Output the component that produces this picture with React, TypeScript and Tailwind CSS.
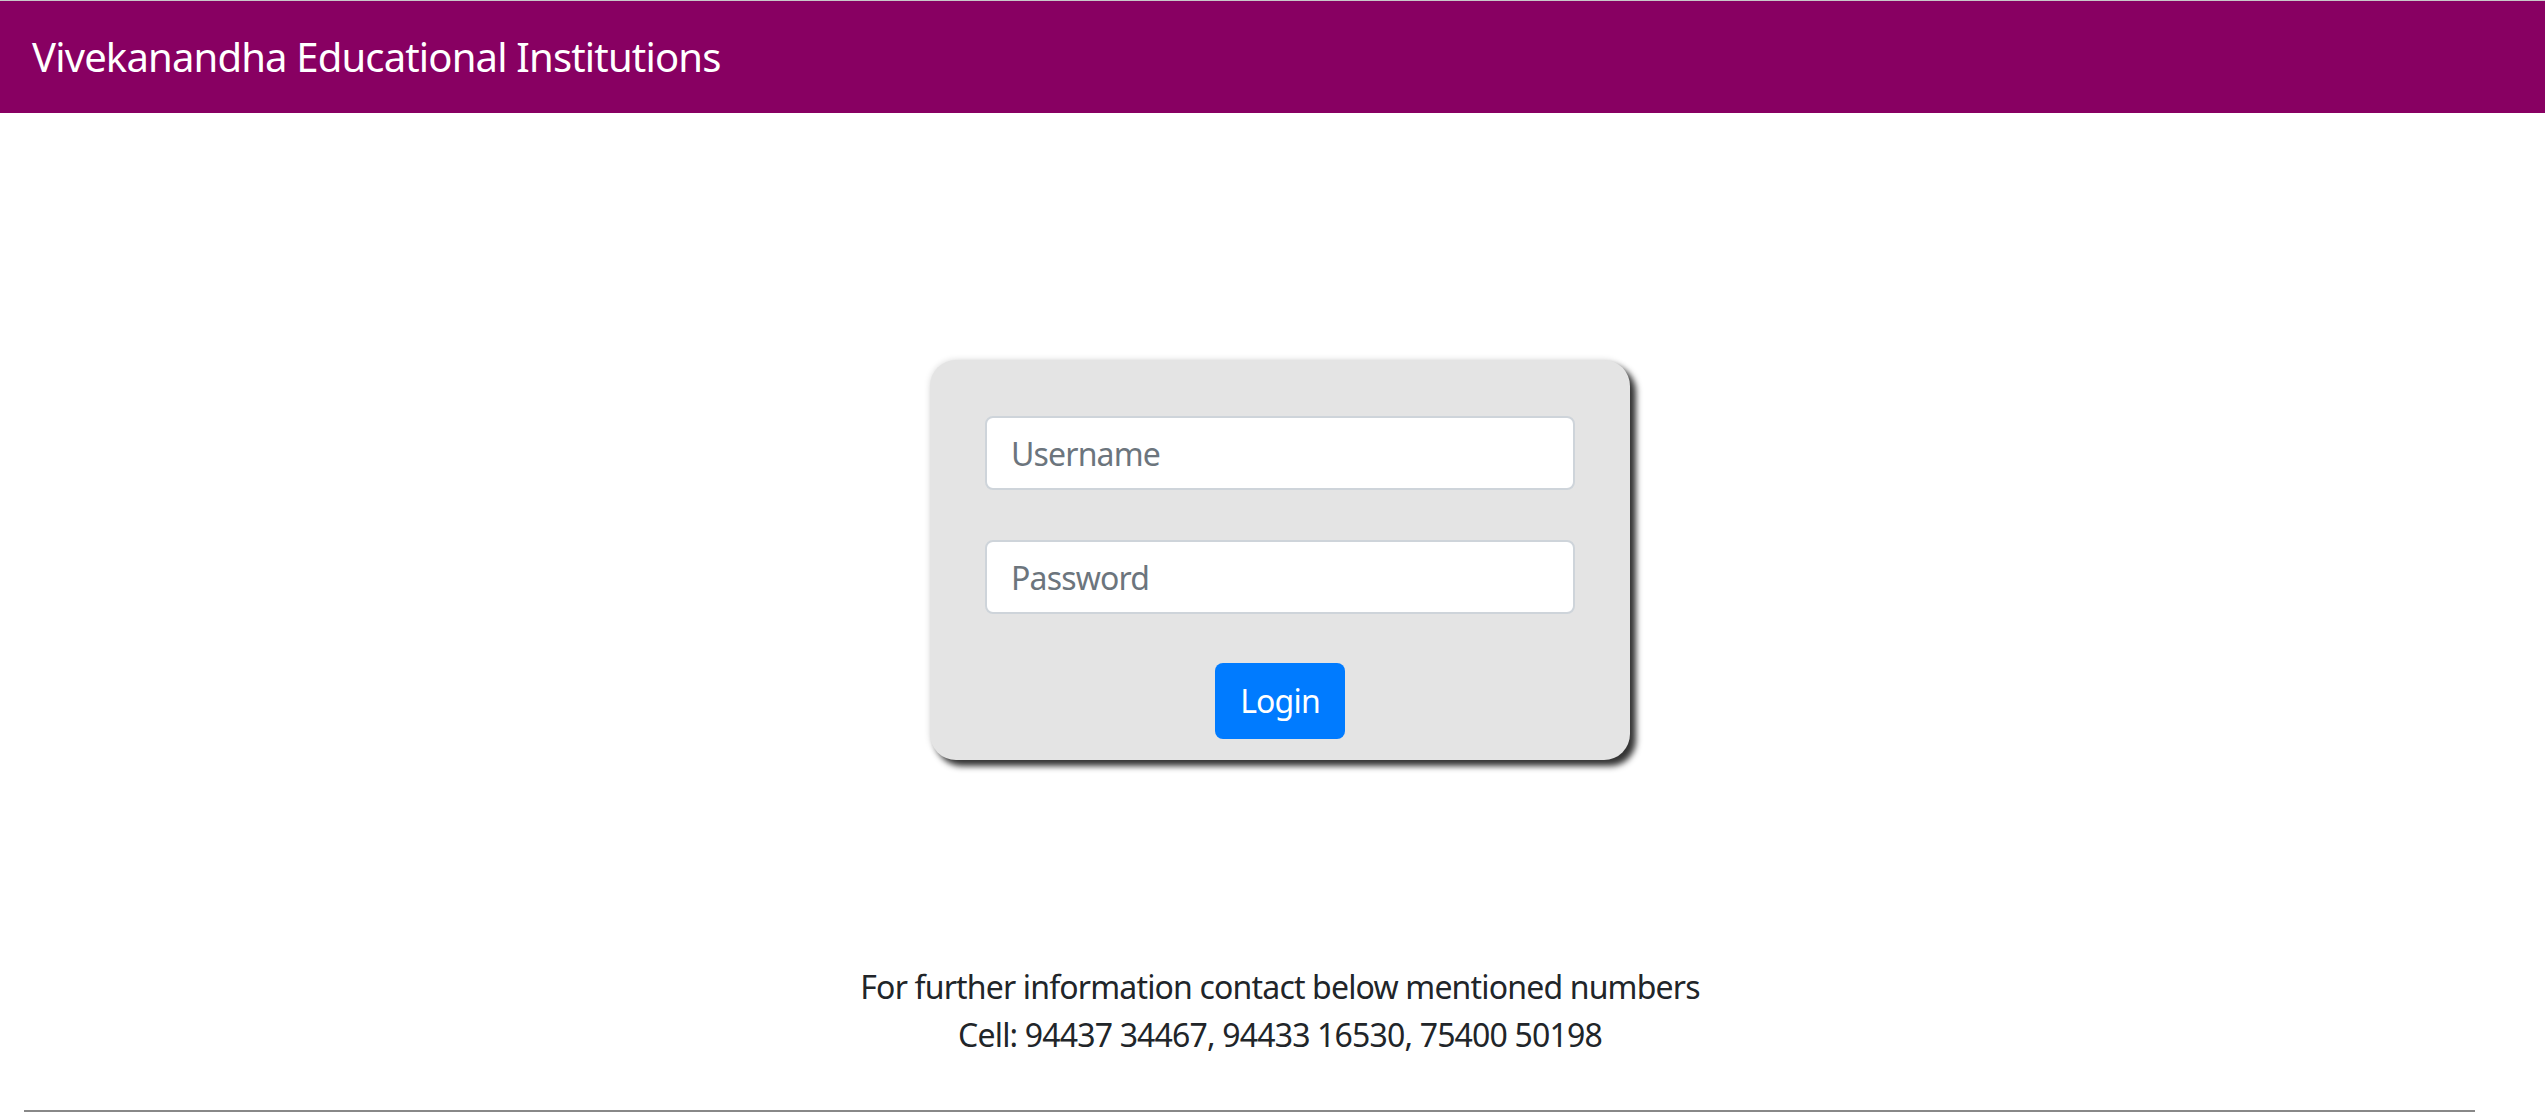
import { useState } from 'react';

const App = () => {
  const [username, setUsername] = useState('');
  const [password, setPassword] = useState('');

  return (
    <div className="min-h-screen w-full bg-white font-['Noto_Sans','Open_Sans',sans-serif] tracking-[-0.052em] text-[#212529]">
      {/* Top navbar */}
      <nav className="border-t border-[#c8c8c8] bg-[#880062] px-8 py-[26px]">
        <span className="block text-[40px] leading-[60px] text-white">Vivekanandha Educational Institutions</span>
      </nav>

      <main className="flex flex-col items-center pl-[15px]">
        {/* Login card */}
        <form
          className="mt-[247px] flex w-[700px] flex-col rounded-[26px] bg-[#e4e4e4] px-[55px] pt-[56px] pb-[21px] shadow-[6px_6px_6px_#333,0_0_6px_rgba(0,0,0,0.15)]"
          onSubmit={e => e.preventDefault()}
        >
          <input
            type="text"
            value={username}
            onChange={e => setUsername(e.target.value)}
            placeholder="Username"
            className="h-[74px] w-full rounded-[8px] border-2 border-[#ced4da] bg-white px-[24px] text-[32px] text-[#495057] outline-none placeholder:text-[#6c757d]"
          />
          <input
            type="password"
            value={password}
            onChange={e => setPassword(e.target.value)}
            placeholder="Password"
            className="mt-[50px] h-[74px] w-full rounded-[8px] border-2 border-[#ced4da] bg-white px-[24px] text-[32px] text-[#495057] outline-none placeholder:text-[#6c757d]"
          />
          <div className="mt-[49px] flex justify-center">
            <button type="submit" className="h-[76px] w-[130px] rounded-[8px] bg-[#007bff] text-[32px] leading-[48px] text-white">
              Login
            </button>
          </div>
        </form>

        {/* Contact info */}
        <div className="mt-[203px] text-center text-[32px] leading-[48px] text-[#212529]">
          <p>For further information contact below mentioned numbers</p>
          <p>Cell: 94437 34467, 94433 16530, 75400 50198</p>
        </div>
      </main>

      <hr className="mt-[51px] ml-[24px] mr-[70px] border-t-2 border-[#888888]" />
    </div>
  );
};

export default App;
